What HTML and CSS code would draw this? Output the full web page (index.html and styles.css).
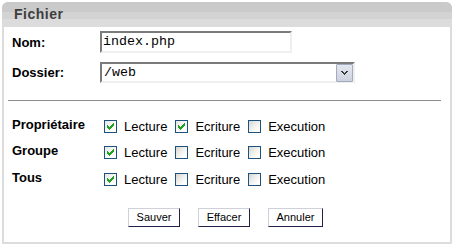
FILE: index.html
```html
<!DOCTYPE html>
<html>
<head>
<meta charset="utf-8">
<link rel="stylesheet" href="styles.css">
</head>
<body>
<div class="panel">
  <div class="head">Fichier</div>
  <div class="body">
    <div class="field">
      <span class="lbl">Nom:</span>
      <div class="input">index.php</div>
    </div>
    <div class="field field2">
      <span class="lbl">Dossier:</span>
      <div class="select">
        <span class="seltext">/web</span>
        <span class="arrow"><svg width="9" height="6" viewBox="0 0 9 6"><path d="M1 1h2v1h1v1h1v-1h1v-1h2v1h-1v1h-1v1h-1v1h-1v-1h-1v-1h-1v-1h-1z" fill="#3a3a3a"/></svg></span>
      </div>
    </div>
    <div class="sep"></div>
    <div class="perms">
      <div class="prow">
        <span class="plbl">Propriétaire</span>
        <span class="opt"><span class="cb on"><svg width="11" height="11" viewBox="1 1 11 11"><path d="M9 3h1v1h-1z M8 4h2v1h-2z M3 5h1v1h-1z M7 5h3v1h-3z M3 6h2v1h-2z M6 6h3v1h-3z M3 7h5v1h-5z M4 8h3v1h-3z M5 9h1v1h-1z" fill="#21a121"/></svg></span>Lecture</span>
        <span class="opt"><span class="cb on"><svg width="11" height="11" viewBox="1 1 11 11"><path d="M9 3h1v1h-1z M8 4h2v1h-2z M3 5h1v1h-1z M7 5h3v1h-3z M3 6h2v1h-2z M6 6h3v1h-3z M3 7h5v1h-5z M4 8h3v1h-3z M5 9h1v1h-1z" fill="#21a121"/></svg></span>Ecriture</span>
        <span class="opt"><span class="cb"></span>Execution</span>
      </div>
      <div class="prow">
        <span class="plbl">Groupe</span>
        <span class="opt"><span class="cb on"><svg width="11" height="11" viewBox="1 1 11 11"><path d="M9 3h1v1h-1z M8 4h2v1h-2z M3 5h1v1h-1z M7 5h3v1h-3z M3 6h2v1h-2z M6 6h3v1h-3z M3 7h5v1h-5z M4 8h3v1h-3z M5 9h1v1h-1z" fill="#21a121"/></svg></span>Lecture</span>
        <span class="opt"><span class="cb"></span>Ecriture</span>
        <span class="opt"><span class="cb"></span>Execution</span>
      </div>
      <div class="prow">
        <span class="plbl">Tous</span>
        <span class="opt"><span class="cb on"><svg width="11" height="11" viewBox="1 1 11 11"><path d="M9 3h1v1h-1z M8 4h2v1h-2z M3 5h1v1h-1z M7 5h3v1h-3z M3 6h2v1h-2z M6 6h3v1h-3z M3 7h5v1h-5z M4 8h3v1h-3z M5 9h1v1h-1z" fill="#21a121"/></svg></span>Lecture</span>
        <span class="opt"><span class="cb"></span>Ecriture</span>
        <span class="opt"><span class="cb"></span>Execution</span>
      </div>
    </div>
    <div class="buttons">
      <span class="btn w52">Sauver</span>
      <span class="btn w52">Effacer</span>
      <span class="btn w55">Annuler</span>
    </div>
  </div>
</div>
</body>
</html>
```

FILE: styles.css
```css
html, body {
  margin: 0;
  padding: 0;
  background: #fff;
}

.panel {
  width: 450px;
  height: 242px;
  margin: 2px;
  background: #dcdcdc;
  border-radius: 6px 6px 0 0;
  display: flex;
  flex-direction: column;
  overflow: hidden;
  font-family: "Liberation Sans", Arial, sans-serif;
}

.head {
  flex: none;
  height: 25px;
  line-height: 25px;
  padding-left: 12px;
  background: linear-gradient(#cacaca 0, #cacaca 10px, #d3d3d3 10px, #d3d3d3 17px, #dcdcdc 17px);
  font-size: 14px;
  font-weight: bold;
  letter-spacing: 0.5px;
  color: #3e3e3e;
}

.body {
  flex: 1;
  background: #fff;
  margin: 0 2px 2px;
  padding: 4px 0 0 8px;
}

.field {
  display: flex;
  align-items: center;
  height: 22px;
}

.field2 {
  margin-top: 9px;
  height: 21px;
}

.lbl {
  width: 88px;
  font-size: 13px;
  font-weight: bold;
  color: #000;
}

.input {
  box-sizing: border-box;
  width: 192px;
  height: 22px;
  border-style: solid;
  border-width: 2px;
  border-color: #7b7b7b #efefef #efefef #7b7b7b;
  font-family: "Liberation Mono", "Courier New", monospace;
  font-size: 13.33px;
  line-height: 18px;
  padding-left: 1px;
  color: #000;
}

.select {
  box-sizing: border-box;
  width: 255px;
  height: 21px;
  border-style: solid;
  border-width: 2px;
  border-color: #7b7b7b #efefef #efefef #7b7b7b;
  display: flex;
  align-items: center;
  justify-content: space-between;
  padding-bottom: 1px;
}

.seltext {
  font-family: "Liberation Mono", "Courier New", monospace;
  font-size: 13.33px;
  padding-left: 2px;
  color: #000;
}

.arrow {
  box-sizing: border-box;
  width: 17px;
  height: 18px;
  margin-top: 1px;
  border: 1px solid #a5abbf;
  border-radius: 1px;
  background: linear-gradient(#e4e7ef, #cdd2df);
  display: flex;
  align-items: center;
  justify-content: center;
}

.arrow svg {
  display: block;
  margin-top: 1px;
}

.sep {
  height: 1px;
  background: #8c8c8c;
  margin: 17px 9px 0 -4px;
}

.perms {
  margin-top: 12px;
}

.prow {
  display: flex;
  align-items: center;
  height: 26.5px;
}

.plbl {
  width: 92px;
  font-size: 13px;
  font-weight: bold;
  color: #000;
  padding-bottom: 4px;
}

.opt {
  display: flex;
  align-items: center;
  gap: 7px;
  margin-right: 8px;
  font-size: 13px;
  color: #000;
}

.cb {
  box-sizing: border-box;
  width: 13px;
  height: 13px;
  border: 1px solid #1c5180;
  background: linear-gradient(135deg, #d6d6d0 0%, #efefec 45%, #fff 80%);
  display: flex;
}

.cb.on {
  background: linear-gradient(135deg, #e4e4e0 0%, #f7f7f5 45%, #fff 80%);
}

.cb svg {
  display: block;
}

.buttons {
  display: flex;
  gap: 18px;
  margin-top: 15.5px;
  padding-left: 116px;
}

.btn {
  box-sizing: border-box;
  height: 19px;
  border-style: solid;
  border-width: 1px;
  border-color: #cfd1da #23234a #23234a #cfd1da;
  background: #fff;
  font-size: 11px;
  line-height: 17px;
  text-align: center;
  color: #000;
}

.w52 { width: 52px; }
.w55 { width: 55px; }
```
